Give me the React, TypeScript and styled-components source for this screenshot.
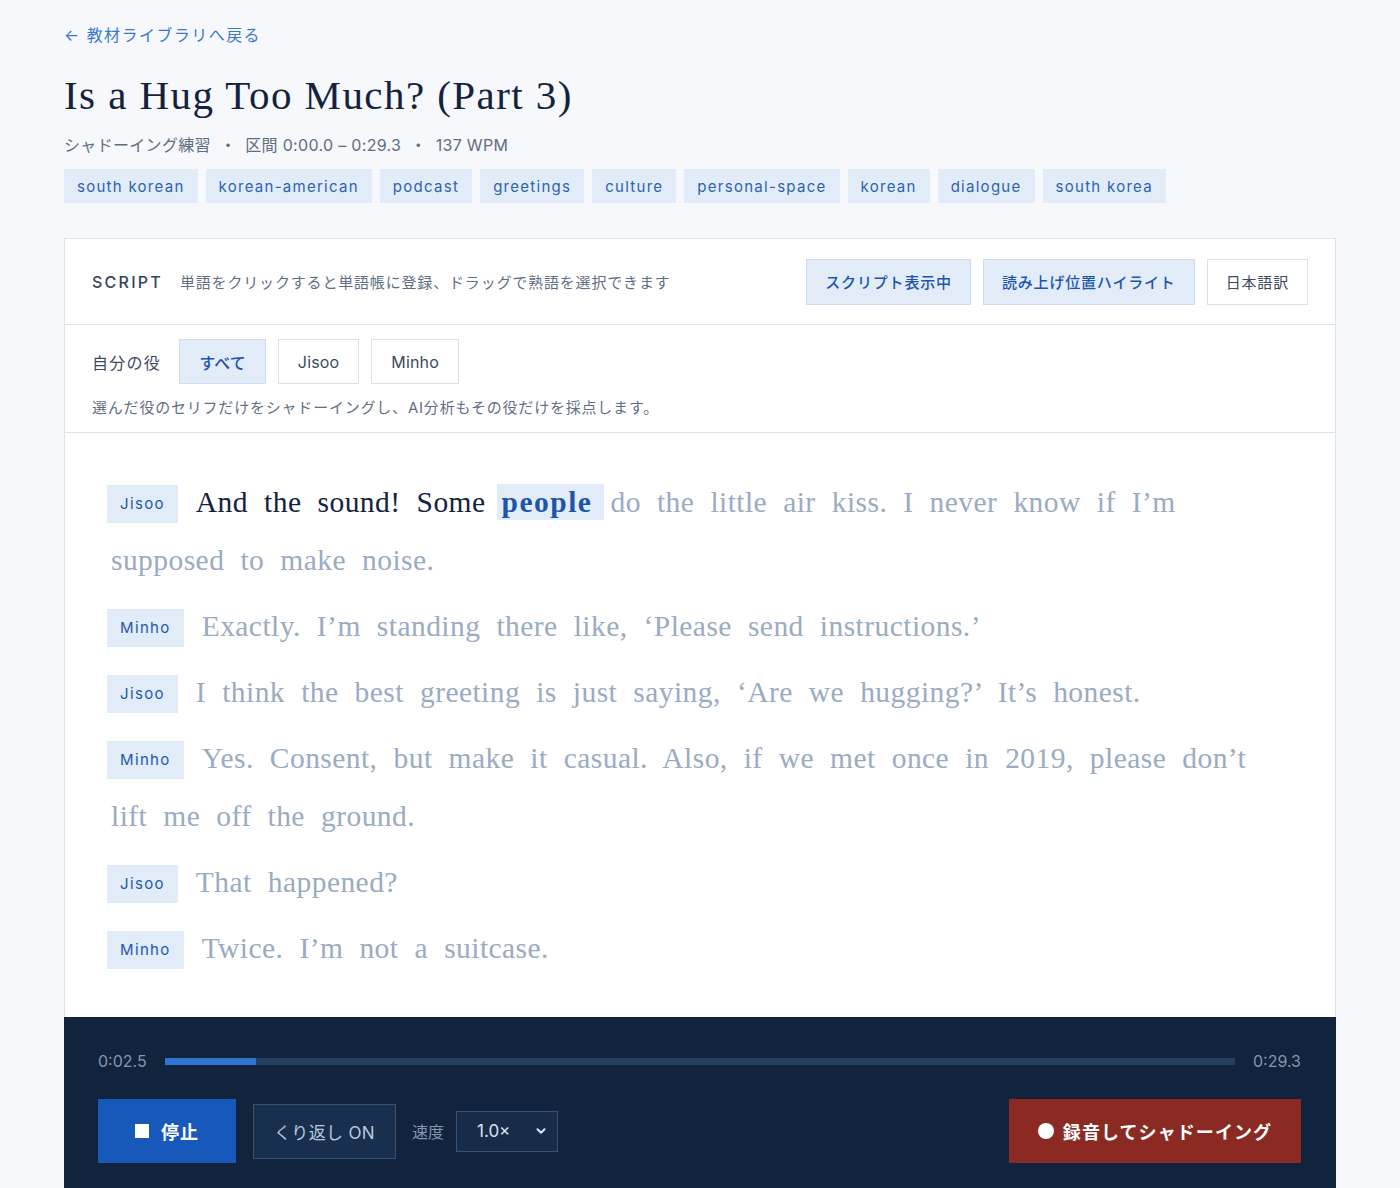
import React from 'react';
import styled, { createGlobalStyle } from 'styled-components';

const GlobalStyle = createGlobalStyle`
  html, body {
    margin: 0;
    padding: 0;
    background: #f6f8fb;
  }
  body {
    font-family: 'Inter', 'Noto Sans CJK JP', sans-serif;
    color: #1b2a41;
  }
  * { box-sizing: border-box; }
`;

const Page = styled.div`
  padding: 23px 64px 0;
  min-height: 1188px;
`;

const BackLink = styled.a`
  display: inline-block;
  font-size: 16px;
  color: #3b78d0;
  text-decoration: none;
  letter-spacing: 0.09em;
  line-height: 24px;
`;

const Title = styled.h1`
  margin: 23px 0 0;
  font-family: 'Liberation Serif', 'Noto Serif', serif;
  font-weight: 500;
  font-size: 41px;
  line-height: 50px;
  letter-spacing: 0.035em;
  color: #142240;
`;

const Meta = styled.div`
  margin-top: 13px;
  font-size: 16px;
  line-height: 24px;
  color: #5f6e83;
  letter-spacing: 0.02em;
  .dot { margin: 0 9px; }
`;

const Tags = styled.div`
  margin-top: 12px;
  display: flex;
  flex-wrap: wrap;
  gap: 8px;
`;

const Tag = styled.span`
  height: 34px;
  padding: 0 13px;
  display: inline-flex;
  align-items: center;
  background: #e2ecf8;
  color: #2d62b3;
  font-size: 15px;
  letter-spacing: 0.085em;
`;

const Panel = styled.section`
  margin-top: 35px;
  background: #fff;
  border: 1px solid #dde4ee;
  border-bottom: none;
`;

const PanelHeader = styled.div`
  height: 86px;
  padding: 0 27px;
  display: flex;
  align-items: center;
  border-bottom: 1px solid #dde4ee;
`;

const ScriptLabel = styled.span`
  font-size: 16px;
  letter-spacing: 0.14em;
  color: #34435a;
  font-weight: 500;
`;

const Hint = styled.span`
  margin-left: 17px;
  font-size: 15px;
  color: #5f6e83;
  letter-spacing: 0.055em;
`;

const HeaderButtons = styled.div`
  margin-left: auto;
  display: flex;
  gap: 12px;
`;

const ToggleButton = styled.button<{ $active?: boolean }>`
  height: 46px;
  padding: 0 18px;
  font-family: inherit;
  font-size: 15px;
  font-weight: ${p => (p.$active ? 500 : 400)};
  letter-spacing: 0.055em;
  color: ${p => (p.$active ? '#1d55ad' : '#3c4a5e')};
  background: ${p => (p.$active ? '#e2ecf8' : '#fff')};
  border: 1px solid ${p => (p.$active ? '#cfdcee' : '#d9e0ea')};
  cursor: pointer;
`;

const RoleSection = styled.div`
  padding: 14px 27px 13px;
  border-bottom: 1px solid #dde4ee;
`;

const RoleRow = styled.div`
  display: flex;
  align-items: center;
  gap: 12px;
`;

const RoleLabel = styled.span`
  font-size: 16px;
  color: #3c4a5e;
  letter-spacing: 0.08em;
  margin-right: 6px;
`;

const RoleButton = styled(ToggleButton)`
  height: 45px;
  padding: 0 19px;
  font-size: 16px;
  letter-spacing: 0.01em;
`;

const RoleNote = styled.p`
  margin: 13px 0 0;
  font-size: 15px;
  line-height: 22px;
  color: #5f6e83;
  letter-spacing: 0.053em;
`;

const Script = styled.div`
  padding: 40px 60px 40px 46px;
`;

const Line = styled.p`
  margin: 0 0 8px;
  font-family: 'Liberation Serif', 'Noto Serif', serif;
  font-size: 29.5px;
  line-height: 58px;
  word-spacing: 0.28em;
  letter-spacing: 0.015em;
  color: #9aabc2;
  &:last-child { margin-bottom: 0; }
`;

const Speaker = styled.span`
  display: inline-flex;
  align-items: center;
  justify-content: center;
  height: 38px;
  padding: 0 13px;
  margin: 0 18px 0 -4px;
  vertical-align: 3px;
  background: #e2ecf8;
  color: #2458b0;
  font-family: 'Inter', 'Noto Sans CJK JP', sans-serif;
  font-size: 15px;
  letter-spacing: 0.09em;
  word-spacing: 0;
`;

const Spoken = styled.span`
  color: #142240;
`;

const Current = styled.span`
  display: inline-block;
  line-height: 36px;
  margin: 0 -10px 0 -5px;
  padding: 0 12px 0 5px;
  background: #e2ecf8;
  color: #1d55ad;
  font-weight: 700;
  letter-spacing: 0.05em;
`;

const Player = styled.div`
  background: #11233d;
  padding: 34px 35px 26px 34px;
`;

const Progress = styled.div`
  display: flex;
  align-items: center;
  gap: 18px;
  font-size: 16px;
  color: #8596ad;
`;

const Track = styled.div`
  flex: 1;
  height: 7px;
  background: #23405f;
`;

const Fill = styled.div`
  height: 100%;
  background: #2f73d0;
`;

const Controls = styled.div`
  margin-top: 28px;
  display: flex;
  align-items: center;
`;

const StopButton = styled.button`
  width: 138px;
  height: 64px;
  border: none;
  background: #1659bb;
  color: #fff;
  font-family: inherit;
  font-size: 18px;
  font-weight: 700;
  letter-spacing: 0.05em;
  display: inline-flex;
  align-items: center;
  justify-content: center;
  gap: 12px;
  cursor: pointer;
`;

const Square = styled.span`
  width: 14px;
  height: 14px;
  background: #fff;
`;

const RepeatButton = styled.button`
  margin-left: 17px;
  width: 143px;
  height: 55px;
  background: #182f4e;
  border: 1px solid #3a5272;
  color: #b8c8dd;
  font-family: inherit;
  font-size: 17px;
  letter-spacing: 0.02em;
  cursor: pointer;
`;

const SpeedLabel = styled.span`
  margin: 0 12px 0 16px;
  font-size: 16px;
  color: #8596ad;
`;

const SpeedSelect = styled.div`
  width: 102px;
  height: 41px;
  border: 1px solid #3a5272;
  background: #172c49;
  color: #dbe4f1;
  font-size: 17px;
  display: flex;
  align-items: center;
  justify-content: space-between;
  padding: 0 9px 0 20px;
`;

const RecordButton = styled.button`
  margin-left: auto;
  width: 292px;
  height: 64px;
  border: none;
  background: #8a2a22;
  color: #fff;
  font-family: inherit;
  font-size: 18px;
  font-weight: 700;
  letter-spacing: 0.06em;
  display: inline-flex;
  align-items: center;
  justify-content: center;
  gap: 9px;
  cursor: pointer;
`;

const Dot = styled.span`
  width: 16px;
  height: 16px;
  border-radius: 50%;
  background: #fff;
`;

const tags = ['south korean', 'korean-american', 'podcast', 'greetings', 'culture', 'personal-space', 'korean', 'dialogue', 'south korea'];

const lines = [
  { speaker: 'Minho', text: 'Exactly. I’m standing there like, ‘Please send instructions.’' },
  { speaker: 'Jisoo', text: 'I think the best greeting is just saying, ‘Are we hugging?’ It’s honest.' },
  { speaker: 'Minho', text: 'Yes. Consent, but make it casual. Also, if we met once in 2019, please don’t lift me off the ground.' },
  { speaker: 'Jisoo', text: 'That happened?' },
  { speaker: 'Minho', text: 'Twice. I’m not a suitcase.' },
];

export default function App() {
  return (
    <>
      <GlobalStyle />
      <Page>
        <BackLink href="#">← 教材ライブラリへ戻る</BackLink>
        <Title>Is a Hug Too Much? (Part 3)</Title>
        <Meta>
          シャドーイング練習<span className="dot">・</span>区間 0:00.0 – 0:29.3<span className="dot">・</span>137 WPM
        </Meta>
        <Tags>
          {tags.map(t => <Tag key={t}>{t}</Tag>)}
        </Tags>

        <Panel>
          <PanelHeader>
            <ScriptLabel>SCRIPT</ScriptLabel>
            <Hint>単語をクリックすると単語帳に登録、ドラッグで熟語を選択できます</Hint>
            <HeaderButtons>
              <ToggleButton $active>スクリプト表示中</ToggleButton>
              <ToggleButton $active>読み上げ位置ハイライト</ToggleButton>
              <ToggleButton>日本語訳</ToggleButton>
            </HeaderButtons>
          </PanelHeader>

          <RoleSection>
            <RoleRow>
              <RoleLabel>自分の役</RoleLabel>
              <RoleButton $active>すべて</RoleButton>
              <RoleButton>Jisoo</RoleButton>
              <RoleButton>Minho</RoleButton>
            </RoleRow>
            <RoleNote>選んだ役のセリフだけをシャドーイングし、AI分析もその役だけを採点します。</RoleNote>
          </RoleSection>

          <Script>
            <Line>
              <Speaker>Jisoo</Speaker>
              <Spoken>And the sound! Some </Spoken>
              <Current>people</Current> do the little air kiss. I never know if I’m supposed to make noise.
            </Line>
            {lines.map((l, i) => (
              <Line key={i}>
                <Speaker>{l.speaker}</Speaker>
                {l.text}
              </Line>
            ))}
          </Script>
        </Panel>

        <Player>
          <Progress>
            <span>0:02.5</span>
            <Track>
              <Fill style={{ width: `${(2.5 / 29.3) * 100}%` }} />
            </Track>
            <span>0:29.3</span>
          </Progress>
          <Controls>
            <StopButton><Square />停止</StopButton>
            <RepeatButton>くり返し ON</RepeatButton>
            <SpeedLabel>速度</SpeedLabel>
            <SpeedSelect>
              <span>1.0×</span>
              <svg width="14" height="14" viewBox="0 0 24 24" fill="none" stroke="#dbe4f1" strokeWidth="3.5" strokeLinecap="round" strokeLinejoin="round">
                <path d="M6 9l6 6 6-6" />
              </svg>
            </SpeedSelect>
            <RecordButton><Dot />録音してシャドーイング</RecordButton>
          </Controls>
        </Player>
      </Page>
    </>
  );
}
